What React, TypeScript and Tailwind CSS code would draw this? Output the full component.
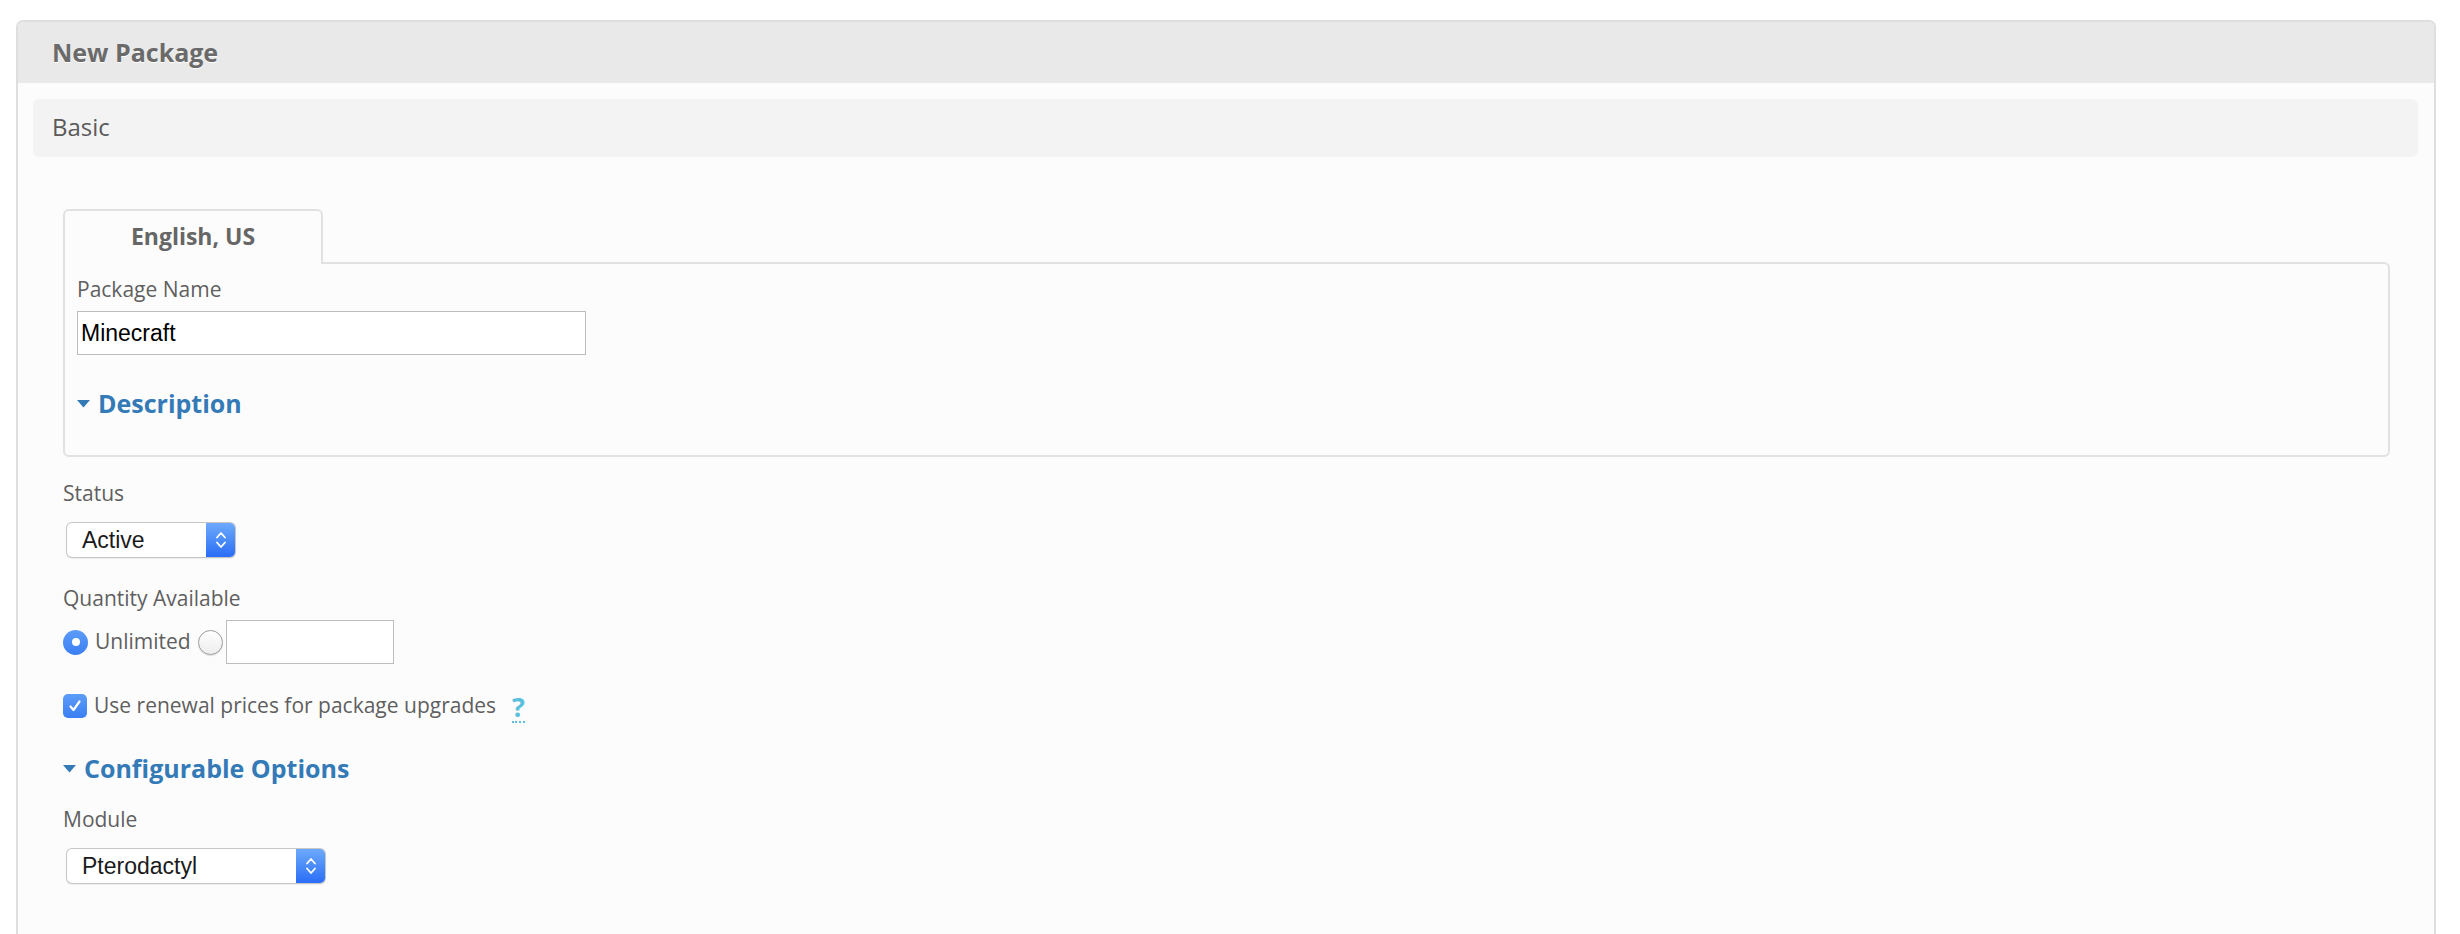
import React from "react";

const font = { fontFamily: '"Open Sans", "Liberation Sans", sans-serif' };

function Caret() {
  return (
    <svg width="13" height="8" viewBox="0 0 13 8" className="shrink-0">
      <polygon points="0,0 13,0 6.5,7.5" fill="#337ab7" />
    </svg>
  );
}

function MacSelect({ value, width }: { value: string; width: string }) {
  return (
    <div
      className={`ml-[4px] flex h-[34px] ${width} items-stretch rounded-[5px] bg-white shadow-[0_0_0_1px_#c6c6c6,0_1px_2px_rgba(0,0,0,0.2)]`}
    >
      <div className="flex flex-1 items-center pl-[15px] text-[23px] text-[#1b1b1b] [font-family:'Liberation_Sans',Arial,sans-serif]">
        {value}
      </div>
      <div className="flex w-[29px] items-center justify-center rounded-r-[5px] bg-gradient-to-b from-[#6ea9fa] to-[#2a6cf6]">
        <svg width="12" height="20" viewBox="0 0 12 20" fill="none" stroke="#fff" strokeWidth="1.8" strokeLinecap="round" strokeLinejoin="round">
          <polyline points="2,7.5 6,3 10,7.5" />
          <polyline points="2,12.5 6,17 10,12.5" />
        </svg>
      </div>
    </div>
  );
}

function Label({ children }: { children: React.ReactNode }) {
  return <div className="h-[28px] text-[21px] leading-[28px] text-[#5f5f5f]">{children}</div>;
}

export default function App() {
  return (
    <div className="h-[934px] overflow-hidden bg-white pt-[20px]" style={font}>
      <div className="ml-[16px] flex h-[914px] w-[2420px] flex-col rounded-t-[7px] border-2 border-b-0 border-[#dedede]">
        <div className="flex h-[61px] items-center rounded-t-[5px] bg-[#e9e9e9] pl-[34px]">
          <h1 className="text-[25px] font-bold text-[#6a6a6a] [text-shadow:0_1px_0_#fff]">New Package</h1>
        </div>

        <div className="flex-1 bg-[#fcfcfc] pl-[15px] pr-[16px] pt-[16px]">
          <div className="flex h-[58px] items-center rounded-[6px] bg-[#f3f3f3] pb-[3px] pl-[19px] text-[24px] text-[#5a5a5a]">
            Basic
          </div>

          <div className="ml-[30px] mr-[28px] mt-[52px]">
            {/* language tab */}
            <div className="relative z-10 -mb-[2px] flex h-[55px] w-[260px] items-center justify-center rounded-t-[6px] border-2 border-b-0 border-[#e1e1e1] bg-[#fcfcfc] pb-[3px]">
              <span className="text-[23px] font-bold text-[#666]">English, US</span>
            </div>
            <div className="h-[195px] rounded-b-[6px] rounded-tr-[6px] border-2 border-[#e1e1e1] pl-[12px] pt-[11px]">
              <Label>Package Name</Label>
              <div className="mt-[8px] flex h-[44px] w-[509px] items-center border border-[#bdbdbd] bg-white pl-[3px] text-[23px] text-black [font-family:'Liberation_Sans',Arial,sans-serif]">
                Minecraft
              </div>
              <div className="mt-[32px] flex h-[34px] items-center gap-[8px]">
                <Caret />
                <span className="text-[25px] font-bold text-[#337ab7]">Description</span>
              </div>
            </div>

            <div className="mt-[22px]">
              <Label>Status</Label>
              <div className="mt-[16px]">
                <MacSelect value="Active" width="w-[168px]" />
              </div>
            </div>

            <div className="mt-[27px]">
              <Label>Quantity Available</Label>
              <div className="mt-[8px] flex h-[44px] items-center">
                <div className="flex h-[25px] w-[25px] items-center justify-center rounded-full bg-gradient-to-b from-[#5d9cf8] to-[#3a7ff3]">
                  <div className="h-[8px] w-[8px] rounded-full bg-white" />
                </div>
                <span className="ml-[7px] text-[21px] text-[#5f5f5f]">Unlimited</span>
                <div className="ml-[7px] h-[25px] w-[25px] rounded-full border border-[#9c9c9c] bg-gradient-to-b from-white to-[#ededed] shadow-[0_1px_1px_rgba(0,0,0,0.12)]" />
                <div className="ml-[3px] h-[44px] w-[168px] border border-[#bdbdbd] bg-white" />
              </div>
            </div>

            <div className="mt-[28px] flex h-[28px] items-center">
              <div className="flex h-[24px] w-[24px] items-center justify-center rounded-[5px] bg-gradient-to-b from-[#5d9cf8] to-[#3a7ff3]">
                <svg width="16" height="16" viewBox="0 0 16 16" fill="none" stroke="#fff" strokeWidth="2.2" strokeLinecap="round" strokeLinejoin="round">
                  <polyline points="3.5,8.5 6.5,12 12.5,3.5" />
                </svg>
              </div>
              <span className="ml-[7px] text-[21px] text-[#5f5f5f]">Use renewal prices for package upgrades</span>
              <span className="ml-[16px] mt-[4px] border-b-2 border-dotted border-[#5bc0de] text-[27px] font-bold leading-[28px] text-[#5bc0de]">
                ?
              </span>
            </div>

            <div className="mt-[32px] flex h-[34px] items-center gap-[8px]">
              <Caret />
              <span className="text-[25px] font-bold text-[#337ab7]">Configurable Options</span>
            </div>

            <div className="mt-[19px]">
              <Label>Module</Label>
              <div className="mt-[16px]">
                <MacSelect value="Pterodactyl" width="w-[258px]" />
              </div>
            </div>
          </div>
        </div>
      </div>
    </div>
  );
}
